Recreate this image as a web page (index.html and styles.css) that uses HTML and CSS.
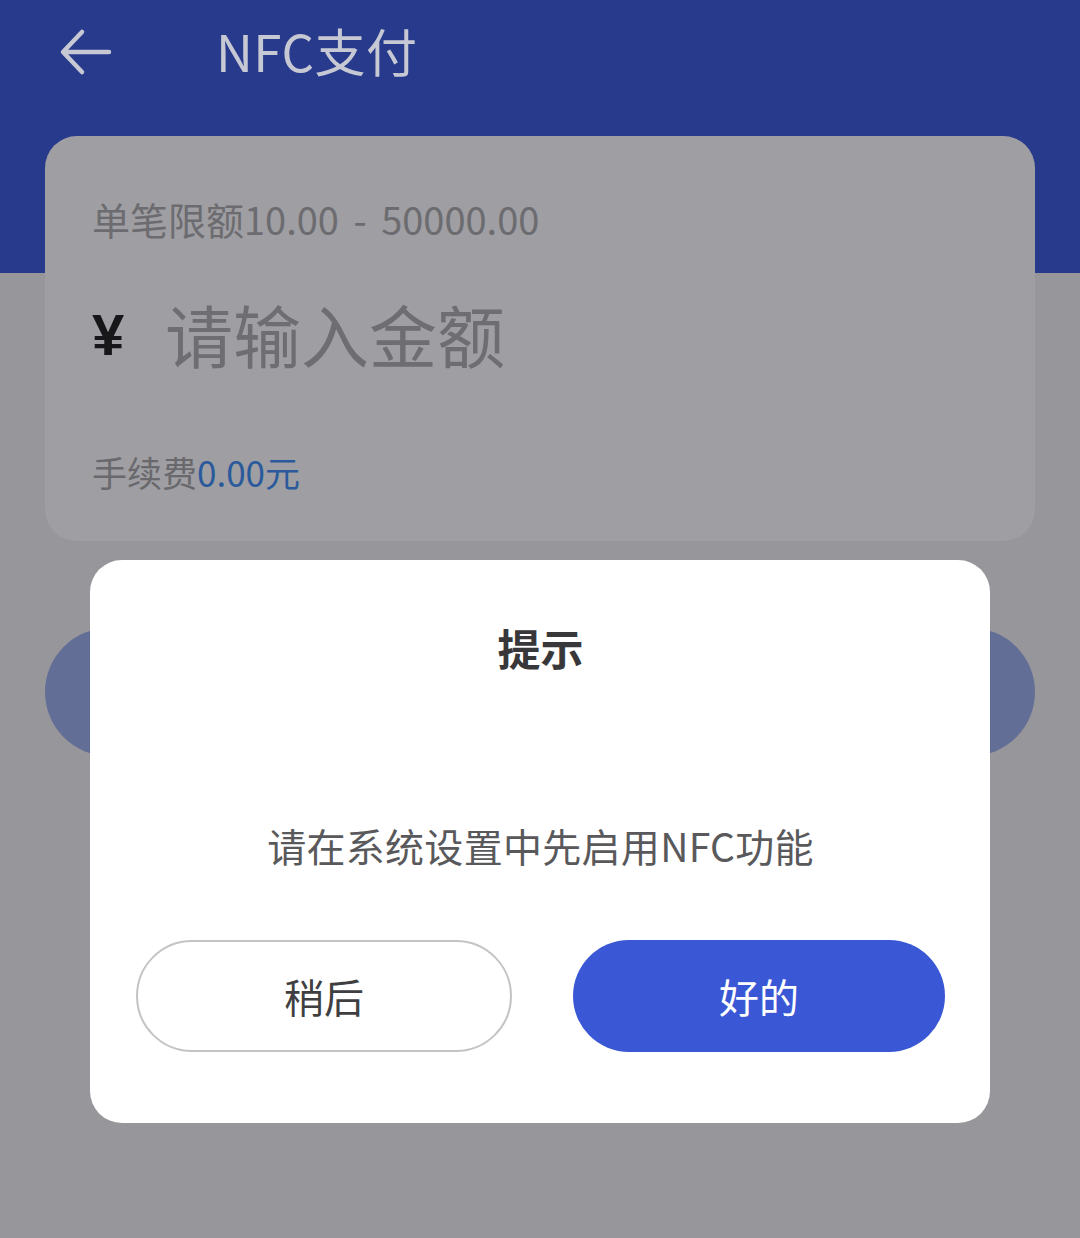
FILE: index.html
```html
<!DOCTYPE html>
<html lang="zh-CN">
<head>
<meta charset="utf-8">
<title>NFC支付</title>
<link rel="stylesheet" href="styles.css">
</head>
<body>
<div class="page">
  <header class="topbar">
    <span class="back" aria-label="返回">
      <svg width="54" height="50" viewBox="0 0 54 50">
        <path d="M51 25 H6 M24 5 L5 25 L24 45" fill="none" stroke="#c6c8d3" stroke-width="4.5" stroke-linecap="round" stroke-linejoin="round"/>
      </svg>
    </span>
    <h1 class="title">NFC支付</h1>
  </header>

  <section class="card">
    <div class="limit">单笔限额10.00 - 50000.00</div>
    <div class="amount">
      <span class="yen">¥</span>
      <span class="placeholder">请输入金额</span>
    </div>
    <div class="fee">手续费<span class="fee-value">0.00元</span></div>
  </section>

  <div class="submit"></div>
</div>

<div class="mask">
  <div class="dialog">
    <div class="dialog-title">提示</div>
    <div class="dialog-msg">请在系统设置中先启用NFC功能</div>
    <div class="dialog-actions">
      <button class="btn btn-later">稍后</button>
      <button class="btn btn-ok">好的</button>
    </div>
  </div>
</div>
</body>
</html>
```

FILE: styles.css
```css
* { box-sizing: border-box; }
html, body {
  margin: 0;
  padding: 0;
}
body {
  width: 1080px;
  height: 1238px;
  overflow: hidden;
  font-family: "Noto Sans CJK SC", "Noto Sans", sans-serif;
  background: linear-gradient(#273a8c 0, #273a8c 273px, #97969b 273px);
}
.page {
  display: flex;
  flex-direction: column;
}
.topbar {
  height: 136px;
  display: flex;
  align-items: flex-start;
  padding-top: 27px;
}
.back {
  width: 54px;
  height: 50px;
  margin-left: 58px;
  display: flex;
}
.title {
  margin: -7px 0 0 104px;
  font-weight: 400;
  font-size: 51px;
  line-height: 60px;
  color: #c6c8d3;
  letter-spacing: 0.5px;
}
.card {
  margin: 0 45px;
  background: #9f9ea2;
  border-radius: 32px;
  padding: 56px 47px 45px;
  display: flex;
  flex-direction: column;
}
.limit {
  font-size: 38px;
  line-height: 54px;
  color: #6c6c70;
  word-spacing: 6px;
}
.amount {
  margin-top: 48px;
  display: flex;
  align-items: center;
  height: 80px;
}
.yen {
  font-family: "Liberation Sans", "Noto Sans", sans-serif;
  font-weight: 700;
  font-size: 58px;
  color: #17171a;
  width: 73px;
}
.placeholder {
  font-size: 68px;
  line-height: 80px;
  color: #6e6e72;
}
.fee {
  margin-top: 74px;
  font-size: 35px;
  line-height: 48px;
  color: #69696d;
}
.fee-value { color: #2a5a9c; }
.submit {
  margin: 87px 45px 0;
  height: 128px;
  border-radius: 64px;
  background: #636e97;
}
.mask {
  position: fixed;
  inset: 0;
  display: flex;
  justify-content: center;
  align-items: flex-start;
  padding-top: 560px;
}
.dialog {
  width: 900px;
  height: 563px;
  background: #ffffff;
  border-radius: 32px;
  padding: 57px 45px 0 46px;
  display: flex;
  flex-direction: column;
  align-items: center;
}
.dialog-title {
  font-size: 43px;
  line-height: 60px;
  font-weight: 700;
  color: #38383b;
}
.dialog-msg {
  margin-top: 142px;
  font-size: 39px;
  line-height: 52px;
  color: #59595c;
  letter-spacing: 0.3px;
}
.dialog-actions {
  margin-top: 69px;
  width: 100%;
  display: flex;
  gap: 61px;
}
.btn {
  flex: 1;
  height: 112px;
  border-radius: 56px;
  font-family: "Noto Sans CJK SC", sans-serif;
  font-size: 40px;
  cursor: pointer;
}
.btn-later {
  background: #ffffff;
  border: 2px solid #c4c4c6;
  color: #3f3f42;
}
.btn-ok {
  background: #3a58d5;
  border: none;
  color: #ffffff;
}
```
